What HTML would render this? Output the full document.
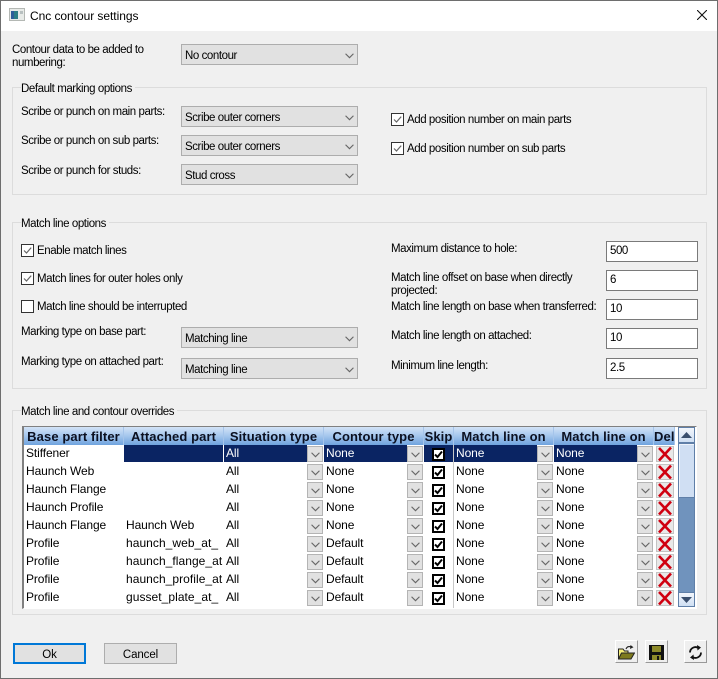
<!DOCTYPE html>
<html><head><meta charset="utf-8"><title>Cnc contour settings</title>
<style>
html,body{margin:0;padding:0;background:#f0f0f0}
#w{position:relative;width:718px;height:679px;overflow:hidden;background:#f0f0f0;font-family:"Liberation Sans",sans-serif;font-size:11.5px;letter-spacing:-.43px;color:#000}
#w div,#w span,#w svg{position:absolute;box-sizing:border-box}
.l{white-space:nowrap;line-height:13px;margin-top:2px}
.g{border:1px solid #dcdcdc;left:12px;width:695px}
.lg{background:#f0f0f0;padding:0 3px 0 0;left:21px;line-height:13px;white-space:nowrap;margin-top:2px}
.c{left:181px;width:177px;height:21px;background:#e1e1e1;border:1px solid #adadad;line-height:22px;padding-left:3px;white-space:nowrap}
.c svg{left:163px;top:8px}
.k{width:13px;height:13px;border:1px solid #333;background:#fff}
.k svg{left:0;top:0}
.i{left:606px;width:92px;height:21px;background:#fff;border:1px solid #7a7a7a;line-height:18px;padding-left:3px}
.r{left:0;width:652px;height:18px;font-size:12px;letter-spacing:-.1px;line-height:16px}
.r>span{top:0;height:17px;white-space:nowrap;overflow:hidden;padding-left:2px}
.a{left:2px;width:98px}.b{left:102px;width:99px}.d{left:202px;width:83px}.e{left:302px;width:83px}.f{left:432px;width:83px}.h{left:532px;width:83px}
.u{letter-spacing:.05px}
.s{background:#0a2463;color:#fff}
.n{top:1px;width:16px;height:16px;background:#e1e1e1;border:1px solid #b4b4b4}
.n svg{left:3px;top:5px}
.x1{left:285px}.x2{left:385px}.x3{left:515px}.x4{left:615px}
.sk{left:410px;top:3px;width:13px;height:13px;background:#fff;border:2px solid #000}
.sk svg{left:0;top:0}
.dl{left:634px;top:1px;width:18px;height:16px;background:#e8e8e8;border:1px solid #c4c4c4}
.dl svg{left:0;top:-1px}
.hd{top:-1px;height:18px;font-size:13px;font-weight:bold;letter-spacing:.1px;line-height:19px;text-align:center;color:#0b1020;background:linear-gradient(#d3e3f7,#a9c9ee 45%,#6fa3de);border-right:1px solid #a5c4ea;white-space:nowrap;overflow:hidden}
.tb{width:23px;height:23px;background:#efefef;border:1px solid;border-color:#fff #999 #999 #fff}
.bt{top:643px;width:73px;height:21px;background:#e1e1e1;text-align:center;font-size:11.5px;letter-spacing:-.1px}
</style></head><body>
<div id="w">
<svg width="0" height="0" style="display:none"><defs>
<symbol id="ch" viewBox="0 0 8 5"><path d="M.5.5 4 4 7.5.5" fill="none" stroke="#666" stroke-width="1"/></symbol>
<symbol id="ck" viewBox="0 0 11 11"><path d="M2 5.500 4.500 8 9.200 2.600" fill="none" stroke="#666" stroke-width="1.200"/></symbol>
<symbol id="ckb" viewBox="0 0 9 9"><path d="M1 4.500 3.500 7 8 1.500" fill="none" stroke="#000" stroke-width="2"/></symbol>
<symbol id="xx" viewBox="0 0 16 16"><path d="M2 2 14 14.500M14 1.500 2 14.500" fill="none" stroke="#d00010" stroke-width="2.600"/></symbol>
</defs></svg>

<!-- window frame + title -->
<div style="left:0;top:0;width:718px;height:31px;background:#fff"></div>
<svg style="left:9px;top:8px" width="16" height="13" viewBox="0 0 16 13"><rect x=".5" y=".5" width="15" height="12" fill="#e8ebe8" stroke="#b4b8b4"/><rect x="2" y="3" width="7" height="8" fill="#2d7f86"/><rect x="2" y="3" width="3" height="8" fill="#2f5f9a"/><rect x="11" y="3" width="3" height="3" fill="#b8c0c0"/></svg>
<div class="l" style="left:30px;top:9px;margin-top:1px;font-size:12px;letter-spacing:-.05px">Cnc contour settings</div>
<svg style="left:697px;top:10px" width="10" height="10" viewBox="0 0 10 10"><path d="M0 0 10 10M10 0 0 10" stroke="#111" stroke-width="1.100"/></svg>
<div style="left:0;top:0;width:718px;height:1px;background:#6e6e6e"></div>
<div style="left:0;top:0;width:1px;height:679px;background:#6e6e6e"></div>
<div style="left:717px;top:0;width:1px;height:679px;background:#6e6e6e"></div>
<div style="left:0;top:678px;width:718px;height:1px;background:#6e6e6e"></div>

<!-- top -->
<div class="l" style="left:12px;top:42px">Contour data to be added to<br>numbering:</div>
<div class="c" style="top:44px">No contour<svg width="9" height="6"><use href="#ch"/></svg></div>

<!-- default marking -->
<div class="g" style="top:87px;height:108px"></div>
<div class="lg" style="top:81px">Default marking options</div>
<div class="l" style="left:21px;top:104px">Scribe or punch on main parts:</div>
<div class="l" style="left:21px;top:133px">Scribe or punch on sub parts:</div>
<div class="l" style="left:21px;top:163px">Scribe or punch for studs:</div>
<div class="c" style="top:106px">Scribe outer corners<svg width="9" height="6"><use href="#ch"/></svg></div>
<div class="c" style="top:135px">Scribe outer corners<svg width="9" height="6"><use href="#ch"/></svg></div>
<div class="c" style="top:164px">Stud cross<svg width="9" height="6"><use href="#ch"/></svg></div>
<div class="k" style="left:391px;top:113px"><svg width="11" height="11"><use href="#ck"/></svg></div>
<div class="l" style="left:407px;top:112px">Add position number on main parts</div>
<div class="k" style="left:391px;top:142px"><svg width="11" height="11"><use href="#ck"/></svg></div>
<div class="l" style="left:407px;top:141px">Add position number on sub parts</div>

<!-- match line options -->
<div class="g" style="top:222px;height:167px"></div>
<div class="lg" style="top:216px">Match line options</div>
<div class="k" style="left:21px;top:244px"><svg width="11" height="11"><use href="#ck"/></svg></div>
<div class="l" style="left:37px;top:243px">Enable match lines</div>
<div class="k" style="left:21px;top:272px"><svg width="11" height="11"><use href="#ck"/></svg></div>
<div class="l" style="left:37px;top:271px">Match lines for outer holes only</div>
<div class="k" style="left:21px;top:300px"></div>
<div class="l" style="left:37px;top:299px">Match line should be interrupted</div>
<div class="l" style="left:21px;top:324px">Marking type on base part:</div>
<div class="l" style="left:21px;top:354px">Marking type on attached part:</div>
<div class="c" style="top:327px">Matching line<svg width="9" height="6"><use href="#ch"/></svg></div>
<div class="c" style="top:358px">Matching line<svg width="9" height="6"><use href="#ch"/></svg></div>

<div class="l" style="left:391px;top:241px">Maximum distance to hole:</div>
<div class="l" style="left:391px;top:270px">Match line offset on base when directly<br>projected:</div>
<div class="l" style="left:391px;top:299px">Match line length on base when transferred:</div>
<div class="l" style="left:391px;top:328px">Match line length on attached:</div>
<div class="l" style="left:391px;top:358px">Minimum line length:</div>
<div class="i" style="top:241px">500</div>
<div class="i" style="top:270px">6</div>
<div class="i" style="top:299px">10</div>
<div class="i" style="top:328px">10</div>
<div class="i" style="top:358px">2.5</div>

<!-- overrides -->
<div class="g" style="top:410px;height:205px"></div>
<div class="lg" style="top:404px">Match line and contour overrides</div>

<div style="left:22px;top:426px;width:675px;height:183px;background:#fff;border:solid;border-width:1px 1px 1px 2px;border-color:#808080 #fff #fff #808080"></div>
<div style="left:22px;top:428px;width:654px;height:180px">
  <div class="hd" style="left:2px;width:100px">Base part filter</div>
  <div class="hd" style="left:102px;width:100px">Attached part</div>
  <div class="hd" style="left:202px;width:100px">Situation type</div>
  <div class="hd" style="left:302px;width:100px">Contour type</div>
  <div class="hd" style="left:402px;width:30px">Skip</div>
  <div class="hd" style="left:432px;width:100px">Match line on</div>
  <div class="hd" style="left:532px;width:100px">Match line on</div>
  <div class="hd" style="left:632px;width:21px">Del</div>
  <div style="left:431px;top:17px;width:1px;height:163px;background:#c8c8c8"></div>

  <div class="r" style="top:17px"><span class="a">Stiffener</span><span class="b s"></span><span class="d s">All</span><span class="e s">None</span><span class="s" style="left:402px;width:29px;padding:0"></span><span class="f s">None</span><span class="h s">None</span>
   <div class="n x1"><svg width="9" height="6"><use href="#ch"/></svg></div><div class="n x2"><svg width="9" height="6"><use href="#ch"/></svg></div><div class="sk"><svg width="9" height="9"><use href="#ckb"/></svg></div><div class="n x3"><svg width="9" height="6"><use href="#ch"/></svg></div><div class="n x4"><svg width="9" height="6"><use href="#ch"/></svg></div><div class="dl"><svg width="16" height="16"><use href="#xx"/></svg></div></div>

  <div class="r" style="top:35px"><span class="a">Haunch Web</span><span class="b"></span><span class="d">All</span><span class="e">None</span><span class="f">None</span><span class="h">None</span>
   <div class="n x1"><svg width="9" height="6"><use href="#ch"/></svg></div><div class="n x2"><svg width="9" height="6"><use href="#ch"/></svg></div><div class="sk"><svg width="9" height="9"><use href="#ckb"/></svg></div><div class="n x3"><svg width="9" height="6"><use href="#ch"/></svg></div><div class="n x4"><svg width="9" height="6"><use href="#ch"/></svg></div><div class="dl"><svg width="16" height="16"><use href="#xx"/></svg></div></div>

  <div class="r" style="top:53px"><span class="a">Haunch Flange</span><span class="b"></span><span class="d">All</span><span class="e">None</span><span class="f">None</span><span class="h">None</span>
   <div class="n x1"><svg width="9" height="6"><use href="#ch"/></svg></div><div class="n x2"><svg width="9" height="6"><use href="#ch"/></svg></div><div class="sk"><svg width="9" height="9"><use href="#ckb"/></svg></div><div class="n x3"><svg width="9" height="6"><use href="#ch"/></svg></div><div class="n x4"><svg width="9" height="6"><use href="#ch"/></svg></div><div class="dl"><svg width="16" height="16"><use href="#xx"/></svg></div></div>

  <div class="r" style="top:71px"><span class="a">Haunch Profile</span><span class="b"></span><span class="d">All</span><span class="e">None</span><span class="f">None</span><span class="h">None</span>
   <div class="n x1"><svg width="9" height="6"><use href="#ch"/></svg></div><div class="n x2"><svg width="9" height="6"><use href="#ch"/></svg></div><div class="sk"><svg width="9" height="9"><use href="#ckb"/></svg></div><div class="n x3"><svg width="9" height="6"><use href="#ch"/></svg></div><div class="n x4"><svg width="9" height="6"><use href="#ch"/></svg></div><div class="dl"><svg width="16" height="16"><use href="#xx"/></svg></div></div>

  <div class="r" style="top:89px"><span class="a">Haunch Flange</span><span class="b">Haunch Web</span><span class="d">All</span><span class="e">None</span><span class="f">None</span><span class="h">None</span>
   <div class="n x1"><svg width="9" height="6"><use href="#ch"/></svg></div><div class="n x2"><svg width="9" height="6"><use href="#ch"/></svg></div><div class="sk"><svg width="9" height="9"><use href="#ckb"/></svg></div><div class="n x3"><svg width="9" height="6"><use href="#ch"/></svg></div><div class="n x4"><svg width="9" height="6"><use href="#ch"/></svg></div><div class="dl"><svg width="16" height="16"><use href="#xx"/></svg></div></div>

  <div class="r" style="top:107px"><span class="a">Profile</span><span class="b u">haunch_web_at_</span><span class="d">All</span><span class="e">Default</span><span class="f">None</span><span class="h">None</span>
   <div class="n x1"><svg width="9" height="6"><use href="#ch"/></svg></div><div class="n x2"><svg width="9" height="6"><use href="#ch"/></svg></div><div class="sk"><svg width="9" height="9"><use href="#ckb"/></svg></div><div class="n x3"><svg width="9" height="6"><use href="#ch"/></svg></div><div class="n x4"><svg width="9" height="6"><use href="#ch"/></svg></div><div class="dl"><svg width="16" height="16"><use href="#xx"/></svg></div></div>

  <div class="r" style="top:125px"><span class="a">Profile</span><span class="b u">haunch_flange_at</span><span class="d">All</span><span class="e">Default</span><span class="f">None</span><span class="h">None</span>
   <div class="n x1"><svg width="9" height="6"><use href="#ch"/></svg></div><div class="n x2"><svg width="9" height="6"><use href="#ch"/></svg></div><div class="sk"><svg width="9" height="9"><use href="#ckb"/></svg></div><div class="n x3"><svg width="9" height="6"><use href="#ch"/></svg></div><div class="n x4"><svg width="9" height="6"><use href="#ch"/></svg></div><div class="dl"><svg width="16" height="16"><use href="#xx"/></svg></div></div>

  <div class="r" style="top:143px"><span class="a">Profile</span><span class="b u">haunch_profile_at</span><span class="d">All</span><span class="e">Default</span><span class="f">None</span><span class="h">None</span>
   <div class="n x1"><svg width="9" height="6"><use href="#ch"/></svg></div><div class="n x2"><svg width="9" height="6"><use href="#ch"/></svg></div><div class="sk"><svg width="9" height="9"><use href="#ckb"/></svg></div><div class="n x3"><svg width="9" height="6"><use href="#ch"/></svg></div><div class="n x4"><svg width="9" height="6"><use href="#ch"/></svg></div><div class="dl"><svg width="16" height="16"><use href="#xx"/></svg></div></div>

  <div class="r" style="top:161px"><span class="a">Profile</span><span class="b u">gusset_plate_at_</span><span class="d">All</span><span class="e">Default</span><span class="f">None</span><span class="h">None</span>
   <div class="n x1"><svg width="9" height="6"><use href="#ch"/></svg></div><div class="n x2"><svg width="9" height="6"><use href="#ch"/></svg></div><div class="sk"><svg width="9" height="9"><use href="#ckb"/></svg></div><div class="n x3"><svg width="9" height="6"><use href="#ch"/></svg></div><div class="n x4"><svg width="9" height="6"><use href="#ch"/></svg></div><div class="dl"><svg width="16" height="16"><use href="#xx"/></svg></div></div>
</div>

<!-- scrollbar -->
<div style="left:678px;top:427px;width:17px;height:180px;background:#7093bd;border:1px solid #5f7fa8"></div>
<div style="left:678px;top:427px;width:17px;height:16px;background:linear-gradient(#f2f6fc,#cfdff3);border:1px solid #5f7fa8"></div>
<svg style="left:681px;top:432px" width="11" height="6"><path d="M5.500 0 11 6H0z" fill="#3a4f6e"/></svg>
<div style="left:678px;top:443px;width:17px;height:55px;background:#d0dff3;border:1px solid #5f7fa8;box-shadow:inset 1px 1px 0 #eef3fb"></div>
<div style="left:678px;top:592px;width:17px;height:15px;background:linear-gradient(#f2f6fc,#cfdff3);border:1px solid #5f7fa8"></div>
<svg style="left:681px;top:597px" width="11" height="6"><path d="M0 0H11L5.500 6z" fill="#3a4f6e"/></svg>

<!-- bottom -->
<div class="bt" style="left:13px;border:2px solid #0078d7;line-height:21px">Ok</div>
<div class="bt" style="left:104px;border:1px solid #adadad;line-height:22px">Cancel</div>

<div class="tb" style="left:615px;top:640px"><svg style="left:2px;top:4px" width="17" height="15" viewBox="0 0 17 15"><path d="M8 4C9 1.500 11 1 13.500 2" fill="none" stroke="#222" stroke-width="1.100"/><path d="M12.500 0 15.500 2.200 12 4z" fill="#222"/><path d="M.5 14V4H5L6.500 6H10V8" fill="#f5ee7a" stroke="#222"/><path d="M.5 14 3.500 8H16.500L13 14z" fill="#7d7a1e" stroke="#222"/></svg></div>
<div class="tb" style="left:645px;top:640px"><svg style="left:3px;top:4px" width="15" height="15" viewBox="0 0 15 15"><rect width="15" height="15" fill="#111"/><rect x="3" y="1" width="9" height="6" fill="#8d8a2a"/><rect x="3" y="10" width="9" height="5" fill="#8d8a2a"/><rect x="8" y="11" width="2" height="4" fill="#111"/></svg></div>
<div class="tb" style="left:684px;top:640px"><svg style="left:3px;top:4px" width="15" height="15" viewBox="0 0 15 15"><path d="M2 7.500A5.500 5.500 0 0 1 10.500 3M13 7.500A5.500 5.500 0 0 1 4.500 12" fill="none" stroke="#111" stroke-width="1.800"/><path d="M9 0 13 2.500 9.500 5.500zM6 15 2 12.500 5.500 9.500z" fill="#111"/></svg></div>
</div>
</body></html>
